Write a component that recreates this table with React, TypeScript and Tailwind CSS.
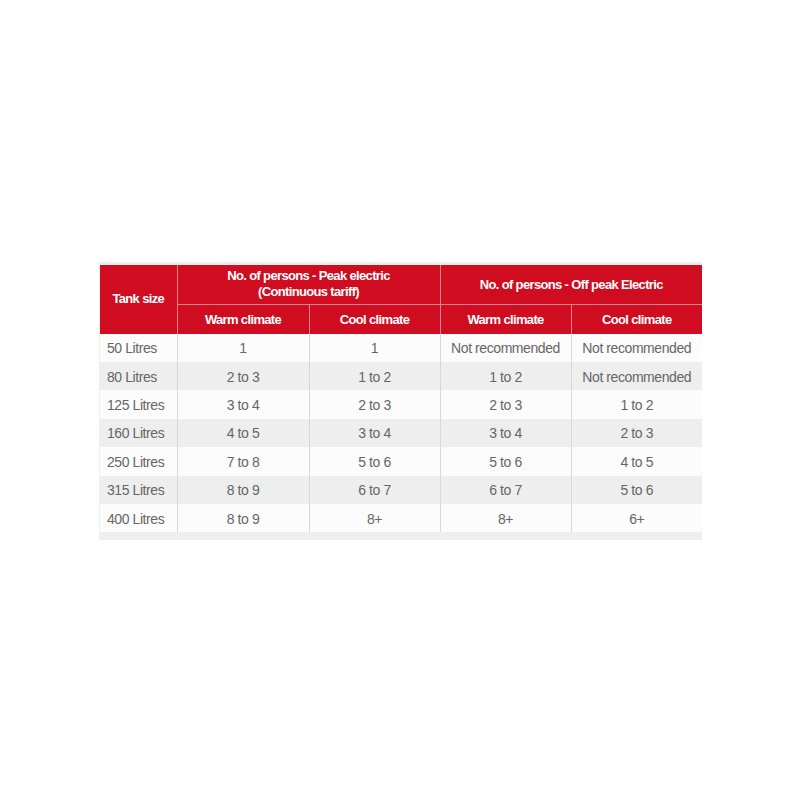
const rows = [
  ['50 Litres', '1', '1', 'Not recommended', 'Not recommended'],
  ['80 Litres', '2 to 3', '1 to 2', '1 to 2', 'Not recommended'],
  ['125 Litres', '3 to 4', '2 to 3', '2 to 3', '1 to 2'],
  ['160 Litres', '4 to 5', '3 to 4', '3 to 4', '2 to 3'],
  ['250 Litres', '7 to 8', '5 to 6', '5 to 6', '4 to 5'],
  ['315 Litres', '8 to 9', '6 to 7', '6 to 7', '5 to 6'],
  ['400 Litres', '8 to 9', '8+', '8+', '6+'],
]

export default function App() {
  return (
    <div className="min-h-[800px] w-full bg-white flex items-center justify-center pl-[1px] pt-[2px] font-['Liberation_Sans',Arial,sans-serif]">
      <div className="w-[603px] bg-[#eeeeee] pt-[3px] pl-[1px] pb-[8px]">
        <table className="w-[602px] border-collapse table-fixed">
          <colgroup>
            <col className="w-[77px]" />
            <col className="w-[132px]" />
            <col className="w-[131px]" />
            <col className="w-[131px]" />
            <col className="w-[131px]" />
          </colgroup>
          <thead className="bg-[#d00c20] text-white text-[13px] tracking-[-0.05em]">
            <tr className="h-[40px]">
              <th rowSpan={2} className="border-r border-[#e9808b] font-bold">Tank size</th>
              <th colSpan={2} className="border-r border-b border-[#e9808b] leading-[16px] font-bold">
                No. of persons - Peak electric
                <br />
                (Continuous tariff)
              </th>
              <th colSpan={2} className="border-b border-[#e9808b] font-bold">No. of persons - Off peak Electric</th>
            </tr>
            <tr className="h-[29px]">
              <th className="border-r border-[#e9808b] font-bold">Warm climate</th>
              <th className="border-r border-[#e9808b] font-bold">Cool climate</th>
              <th className="border-r border-[#e9808b] font-bold">Warm climate</th>
              <th className="font-bold">Cool climate</th>
            </tr>
          </thead>
          <tbody className="text-[#666666] text-[14px] tracking-[-0.03em]">
            {rows.map((r, i) => (
              <tr key={r[0]} className={i % 2 === 0 ? 'h-[28.4px] bg-[#fcfcfc]' : 'h-[28.4px] bg-[#eeeeee]'}>
                <td className="pl-[7px] pt-[2px] border-r border-[#d8d8d8]">{r[0]}</td>
                <td className="text-center pt-[2px] border-r border-[#d8d8d8]">{r[1]}</td>
                <td className="text-center pt-[2px] border-r border-[#d8d8d8]">{r[2]}</td>
                <td className="text-center pt-[2px] border-r border-[#d8d8d8]">{r[3]}</td>
                <td className="text-center pt-[2px]">{r[4]}</td>
              </tr>
            ))}
          </tbody>
        </table>
      </div>
    </div>
  )
}
